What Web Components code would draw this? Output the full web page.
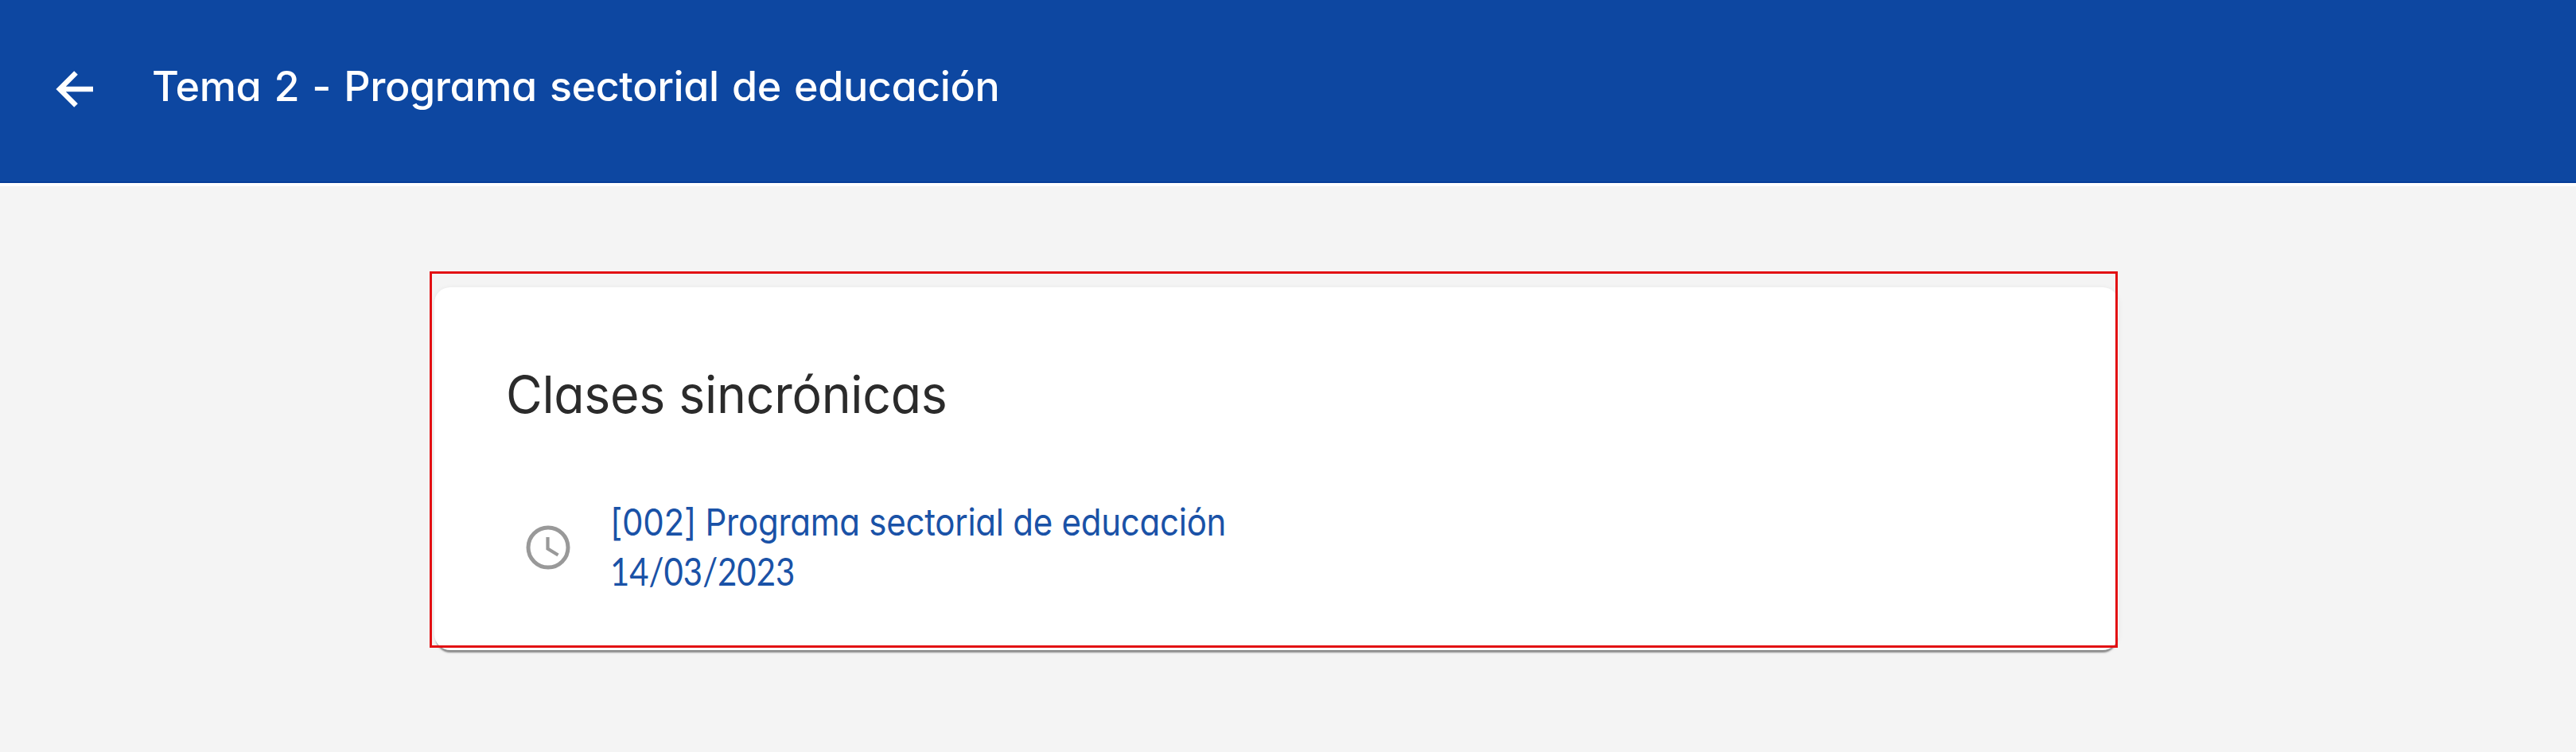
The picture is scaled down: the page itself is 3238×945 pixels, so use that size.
<!DOCTYPE html>
<html lang="es">
<head>
<meta charset="utf-8">
<title>Tema 2 - Programa sectorial de educación</title>
<style>
html,body{margin:0;height:100%;background:#f4f4f4;overflow:hidden}
body{font-family:Inter,"Noto Sans",sans-serif;font-feature-settings:"cv11" 1}
</style>
</head>
<body>
<topic-page>
  <topic-header slot="header">Tema 2 - Programa sectorial de educación</topic-header>
  <class-card heading="Clases sincrónicas">
    <class-item date="14/03/2023">[002] Programa sectorial de educación</class-item>
  </class-card>
</topic-page>
<script>
function define(name, html, setup){
  customElements.define(name, class extends HTMLElement{
    constructor(){
      super();
      const t=document.createElement('template');
      t.innerHTML=html;
      this.attachShadow({mode:'open'}).append(t.content.cloneNode(true));
    }
    connectedCallback(){ if(setup) setup(this,this.shadowRoot); }
  });
}
define('icon-back',`<style>:host{display:block;width:47px;height:46px}svg{display:block;width:100%;height:100%}</style>
<svg viewBox="0 0 47 46" fill="none" stroke="#fff" stroke-width="6.500"><path d="M47 23H5M25.500 2.500L5 23L25.500 43.500"/></svg>`);
define('icon-clock',`<style>:host{display:block;width:56px;height:56px}svg{display:block;width:100%;height:100%}</style>
<svg viewBox="0 0 56 56" fill="none" stroke="#999"><circle cx="28" cy="28" r="25" stroke-width="5"/><path d="M27.500 15V29.500L40.500 37.500" stroke-width="4.200"/></svg>`);
define('topic-header',`<style>
:host{display:flex;align-items:flex-start;box-sizing:border-box;height:230px;padding:89px 0 0 70px;gap:74px;background:#0d47a1;border-bottom:2px solid #063d98;box-shadow:0 4px 0 #fff;color:#fff}
h1{margin:-12px 0 0;font-size:52px;line-height:64px;font-weight:500;letter-spacing:-.4px;word-spacing:2.800px;white-space:nowrap}
</style><icon-back></icon-back><h1><slot></slot></h1>`);
define('class-card',`<style>
:host{display:block;position:relative;box-sizing:border-box;width:2122px;height:473px;margin-left:540px;padding:17px 0 0 3px;border:3px solid #e20f13}
section{position:relative;z-index:-1;box-sizing:border-box;width:2117px;height:456px;padding:95px 90px 0;border-radius:20px;background:#fff;box-shadow:0 5px 2px -2px rgba(0,0,0,.42),0 1px 6px rgba(0,0,0,.07)}
h2{margin:0 0 91px;font-size:65px;line-height:80px;font-weight:370;letter-spacing:-.3px;color:#2b2b2b;white-space:nowrap;transform:scaleX(.963);transform-origin:0 50%}
</style><section><h2></h2><slot></slot></section>`,(h,r)=>{r.querySelector('h2').textContent=h.getAttribute('heading')});
define('class-item',`<style>
:host{display:flex;align-items:center;gap:50px;padding-left:25px;color:#1a52a7}
div{margin-top:-2px}
a{display:block;transform-origin:0 50%;font-size:46.500px;line-height:62px;white-space:nowrap}
.t{letter-spacing:-.3px;transform:scaleX(.904)}
.d{font-family:Lato,sans-serif;font-size:47.500px;transform:scaleX(.882)}
</style><icon-clock></icon-clock><div><a class="t"><slot></slot></a><a class="d"></a></div>`,(h,r)=>{r.querySelector('.d').textContent=h.getAttribute('date')});
define('topic-page',`<style>:host{display:flex;flex-direction:column;height:945px;isolation:isolate}main{margin-top:111px}</style><slot name="header"></slot><main><slot></slot></main>`);
</script>
</body>
</html>
